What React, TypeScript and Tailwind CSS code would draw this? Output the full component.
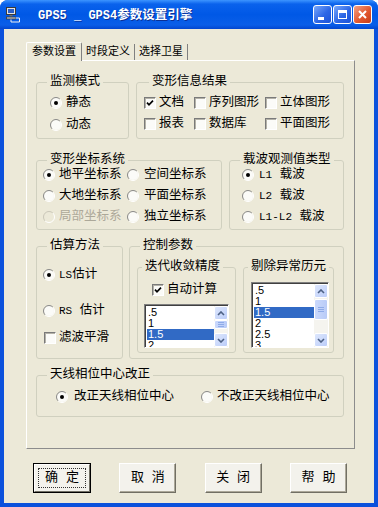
import React from "react";

const FONT = "font-['Liberation_Mono','Noto_Sans_CJK_SC',monospace]";

function Radio({ checked, disabled }: { checked?: boolean; disabled?: boolean }) {
  return (
    <svg width="12" height="12" viewBox="0 0 12 12" className="shrink-0">
      <circle cx="6" cy="6" r="5" fill={disabled ? "#ece9d8" : "#fbfbf8"} />
      <path d="M2.1 9.9A5.5 5.5 0 0 1 9.9 2.1" fill="none" stroke={disabled ? "#c9c6b8" : "#8a8a8a"} strokeWidth="1" />
      <path d="M9.9 2.1A5.5 5.5 0 0 1 2.1 9.9" fill="none" stroke="#ffffff" strokeWidth="1" />
      {checked && <circle cx="6" cy="6" r="2" fill="#000" />}
    </svg>
  );
}

function Check({ checked }: { checked?: boolean }) {
  return (
    <span className="w-[12px] h-[12px] shrink-0 border border-t-[#7a7a7a] border-l-[#7a7a7a] border-r-white border-b-white bg-[#fbfbf8] shadow-[inset_1px_1px_0_#b4b2a8] flex items-center justify-center">
      {checked && (
        <svg width="8" height="8" viewBox="0 0 8 8">
          <path d="M1 3.6L3 5.8L7 1.6" stroke="#000" strokeWidth="1.7" fill="none" />
        </svg>
      )}
    </span>
  );
}

function L({ children }: { children: React.ReactNode }) {
  return <span className="text-[11px]">{children}</span>;
}

function Group({
  title,
  className,
  legendClass,
  children,
}: {
  title: string;
  className: string;
  legendClass?: string;
  children?: React.ReactNode;
}) {
  return (
    <fieldset className={"border border-[#d0d0bf] rounded-[3px] min-w-0 shrink-0 " + className}>
      <legend className={"px-[3px] leading-[16px] " + (legendClass ?? "ml-[10px]")}>{title}</legend>
      {children}
    </fieldset>
  );
}

function RadioRow({ label, checked, disabled, className }: { label: React.ReactNode; checked?: boolean; disabled?: boolean; className?: string }) {
  return (
    <div className={"flex items-center gap-[4px] h-[14px] leading-[14px] whitespace-nowrap " + (disabled ? "text-[#aca899] " : "") + (className ?? "")}>
      <Radio checked={checked} disabled={disabled} />
      <span>{label}</span>
    </div>
  );
}

function CheckRow({ label, checked, className }: { label: React.ReactNode; checked?: boolean; className?: string }) {
  return (
    <div className={"flex items-center gap-[3px] h-[14px] leading-[14px] whitespace-nowrap " + (className ?? "")}>
      <Check checked={checked} />
      <span>{label}</span>
    </div>
  );
}

function Chevron({ down }: { down?: boolean }) {
  return (
    <svg width="8" height="5" viewBox="0 0 8 5">
      <path d={down ? "M1 1L4 4L7 1" : "M1 4L4 1L7 4"} stroke="#4d6185" strokeWidth="1.6" fill="none" />
    </svg>
  );
}

function ScrollBtn({ down }: { down?: boolean }) {
  return (
    <div className="h-[14px] shrink-0 rounded-[2px] border border-white bg-[linear-gradient(135deg,#dde7fd,#bccdf9)] flex items-center justify-center">
      <Chevron down={down} />
    </div>
  );
}

function ListBox({
  items,
  sel,
  className,
  thumbClass,
}: {
  items: string[];
  sel: number;
  className: string;
  thumbClass: string;
}) {
  return (
    <div className={"flex shrink-0 border border-t-[#7f7f7f] border-l-[#7f7f7f] border-r-white border-b-white bg-white " + className}>
      <div className="flex-1 min-w-0 overflow-hidden pt-[1px] pl-[1px] border-t border-l border-t-[#404040] border-l-[#404040]">
        {items.map((it, i) => (
          <div
            key={i}
            className={
              "h-[11px] leading-[11px] pl-[1px] font-['Liberation_Sans'] text-[11px] " +
              (i === sel ? "bg-[#316ac5] text-white" : "text-black")
            }
          >
            {it}
          </div>
        ))}
      </div>
      <div className="w-[14px] shrink-0 flex flex-col bg-[#f5f4ef] border-t border-t-[#404040]">
        <ScrollBtn />
        <div className={"rounded-[2px] border border-white bg-[linear-gradient(90deg,#cad9fc,#b9cbf7)] flex flex-col items-center justify-center gap-[1px] " + thumbClass}>
          <div className="w-[6px] h-[1px] bg-[#8eabe8]" />
          <div className="w-[6px] h-[1px] bg-[#8eabe8]" />
          <div className="w-[6px] h-[1px] bg-[#8eabe8]" />
        </div>
        <div className="flex-1" />
        <ScrollBtn down />
      </div>
    </div>
  );
}

function TitleBar() {
  return (
    <div className="h-[29px] shrink-0 flex items-center pl-[5px] pr-[6px] bg-[linear-gradient(to_bottom,#3d95ff_0%,#0a62ec_14%,#0058e6_50%,#0a5ee8_86%,#0346cf_100%)]">
      <svg width="16" height="16" viewBox="0 0 16 16" className="shrink-0">
        <rect x="1.5" y="0.5" width="9" height="7" fill="#e4e4e4" stroke="#3a3a3a" strokeWidth="1" />
        <rect x="3" y="2" width="6" height="4" fill="#2d5fc6" />
        <rect x="4.5" y="8" width="3" height="1.5" fill="#6f6f6f" />
        <rect x="1.5" y="10" width="9" height="2" fill="#c8c8c8" stroke="#3a3a3a" strokeWidth="0.8" />
        <path d="M10.5 11H14.5V15M6 12.5V15H14.5" stroke="#f0f0f0" strokeWidth="1" fill="none" />
      </svg>
      <span className="ml-[17px] text-white font-bold whitespace-nowrap [text-shadow:1px_1px_0_#0b2f95]">
        <span className="text-[12px]">GPS5 _ GPS4</span>
        <span className="text-[12.5px]">参数设置引擎</span>
      </span>
      <div className="ml-auto flex gap-[1px]">
        <div className="w-[19px] h-[19px] rounded-[3px] border border-white bg-[linear-gradient(135deg,#78a8fb,#2d67e6_55%,#1b52d8)] flex items-end pl-[4px] pb-[3px]">
          <div className="w-[6px] h-[3px] bg-white" />
        </div>
        <div className="w-[19px] h-[19px] rounded-[3px] border border-white bg-[linear-gradient(135deg,#78a8fb,#2d67e6_55%,#1b52d8)] flex items-center justify-center">
          <div className="w-[9px] h-[9px] border border-white border-t-[3px]" />
        </div>
        <div className="w-[19px] h-[19px] rounded-[3px] border border-white bg-[linear-gradient(135deg,#f3a184,#e2582f_55%,#c63c18)] flex items-center justify-center">
          <svg width="9" height="9" viewBox="0 0 9 9">
            <path d="M1 1L8 8M8 1L1 8" stroke="#fff" strokeWidth="2" />
          </svg>
        </div>
      </div>
    </div>
  );
}

function Btn({ label, def }: { label: string; def?: boolean }) {
  if (def) {
    return (
      <button className="w-[58px] h-[30px] p-0 border border-black bg-[#f3f2ec]">
        <div className="w-full h-full border border-t-white border-l-white border-r-[#716f64] border-b-[#716f64] p-[3px]">
          <div className="w-full h-full border border-dotted border-[#333] flex items-center justify-center text-[13px] whitespace-pre">
            {label}
          </div>
        </div>
      </button>
    );
  }
  return (
    <button className="w-[57px] h-[30px] p-0 border border-t-white border-l-white border-r-[#716f64] border-b-[#716f64] bg-[#f3f2ec] shadow-[inset_-1px_-1px_0_#aca899] flex items-center justify-center text-[13px] whitespace-pre">
      {label}
    </button>
  );
}

export default function App() {
  const list1 = [".5", "1", "1.5", "2"];
  const list2 = [".5", "1", "1.5", "2", "2.5", "3"];
  return (
    <div className="w-[378px] h-[507px] bg-white">
      <div className={"w-[378px] h-[507px] flex flex-col bg-[#0b51dc] rounded-t-[8px] overflow-hidden text-black " + FONT}>
        <TitleBar />
        <div className="flex-1 mx-[4px] mb-[4px] bg-[#ece9d8] pl-[22px] pt-[13px] flex flex-col text-[12.5px]">
          {/* tabs */}
          <div className="flex items-end h-[18px] text-[11px]">
            <div className="relative z-10 h-[19px] w-[56px] -mb-[1px] bg-[#ece9d8] border-t border-l border-r border-t-white border-l-white border-r-[#808080] rounded-t-[2px] flex items-center justify-center">
              参数设置
            </div>
            <div className="h-[16px] w-[53px] border-r border-r-[#808080] flex items-center justify-center">时段定义</div>
            <div className="h-[16px] w-[53px] border-r border-r-[#808080] flex items-center justify-center">选择卫星</div>
          </div>
          {/* panel */}
          <div className="w-[329px] h-[389px] shrink-0 border border-t-white border-l-white border-r-[#8c8c8c] border-b-[#8c8c8c] pt-[13px] pl-[9px] flex flex-col">
            {/* row 1 */}
            <div className="flex gap-[7px]">
              <Group title="监测模式" className="w-[93px] h-[65px]">
                <div className="pl-[13px] pt-[6px] flex flex-col gap-[8px]">
                  <RadioRow label="静态" checked />
                  <RadioRow label="动态" />
                </div>
              </Group>
              <Group title="变形信息结果" className="w-[208px] h-[65px]" legendClass="ml-[12px]">
                <div className="pl-[7px] pt-[6px] grid grid-cols-[50px_71px_1fr] gap-y-[7px]">
                  <CheckRow label="文档" checked />
                  <CheckRow label="序列图形" />
                  <CheckRow label="立体图形" />
                  <CheckRow label="报表" />
                  <CheckRow label="数据库" />
                  <CheckRow label="平面图形" />
                </div>
              </Group>
            </div>
            {/* row 2 */}
            <div className="flex gap-[7px] mt-[13px]">
              <Group title="变形坐标系统" className="w-[186px] h-[78px]">
                <div className="pl-[6px] grid grid-cols-[84px_1fr] gap-y-[7px]">
                  <RadioRow label="地平坐标系" checked />
                  <RadioRow label="空间坐标系" className="gap-[5px]" />
                  <RadioRow label="大地坐标系" />
                  <RadioRow label="平面坐标系" className="gap-[5px]" />
                  <RadioRow label="局部坐标系" disabled />
                  <RadioRow label="独立坐标系" className="gap-[5px]" />
                </div>
              </Group>
              <Group title="载波观测值类型" className="w-[115px] h-[78px]">
                <div className="pl-[12px] flex flex-col gap-[7px]">
                  <RadioRow label={<><L>L1</L> 载波</>} checked className="gap-[5px]" />
                  <RadioRow label={<><L>L2</L> 载波</>} className="gap-[5px]" />
                  <RadioRow label={<><L>L1-L2</L> 载波</>} className="gap-[5px]" />
                </div>
              </Group>
            </div>
            {/* row 3 */}
            <div className="flex gap-[6px] mt-[8px]">
              <Group title="估算方法" className="w-[87px] h-[121px]">
                <div className="pl-[6px] pt-[14px] flex flex-col">
                  <RadioRow label={<><L>LS</L>估计</>} checked />
                  <RadioRow label={<><L>RS</L> 估计</>} className="mt-[22px]" />
                  <CheckRow label="滤波平滑" className="mt-[13px] ml-[1px]" />
                </div>
              </Group>
              <Group title="控制参数" className="w-[215px] h-[121px]">
                <div className="pl-[7px] pt-[5px] flex gap-[7px]">
                  <Group title="迭代收敛精度" className="w-[99px] h-[94px]" legendClass="ml-[4px]">
                    <div className="pt-[8px] flex flex-col">
                      <CheckRow label="自动计算" checked className="pl-[14px]" />
                      <ListBox items={list1} sel={2} className="mt-[7px] ml-[6px] w-[85px] h-[44px]" thumbClass="h-[9px]" />
                    </div>
                  </Group>
                  <Group title="剔除异常历元" className="w-[91px] h-[94px]" legendClass="ml-[4px]">
                    <div className="pt-[7px]">
                      <ListBox items={list2} sel={2} className="ml-[7px] w-[78px] h-[66px]" thumbClass="mt-[1px] h-[21px]" />
                    </div>
                  </Group>
                </div>
              </Group>
            </div>
            {/* row 4 */}
            <div className="flex mt-[8px]">
              <Group title="天线相位中心改正" className="w-[308px] h-[50px]">
                <div className="pl-[19px] pt-[7px] flex">
                  <RadioRow label="改正天线相位中心" checked className="w-[145px] gap-[6px]" />
                  <RadioRow label="不改正天线相位中心" className="gap-[3px]" />
                </div>
              </Group>
            </div>
          </div>
          {/* buttons */}
          <div className="mt-[14px] ml-[7px] w-[314px] flex justify-between">
            <Btn label="确 定" def />
            <Btn label="取 消" />
            <Btn label="关 闭" />
            <Btn label="帮 助" />
          </div>
        </div>
      </div>
    </div>
  );
}
